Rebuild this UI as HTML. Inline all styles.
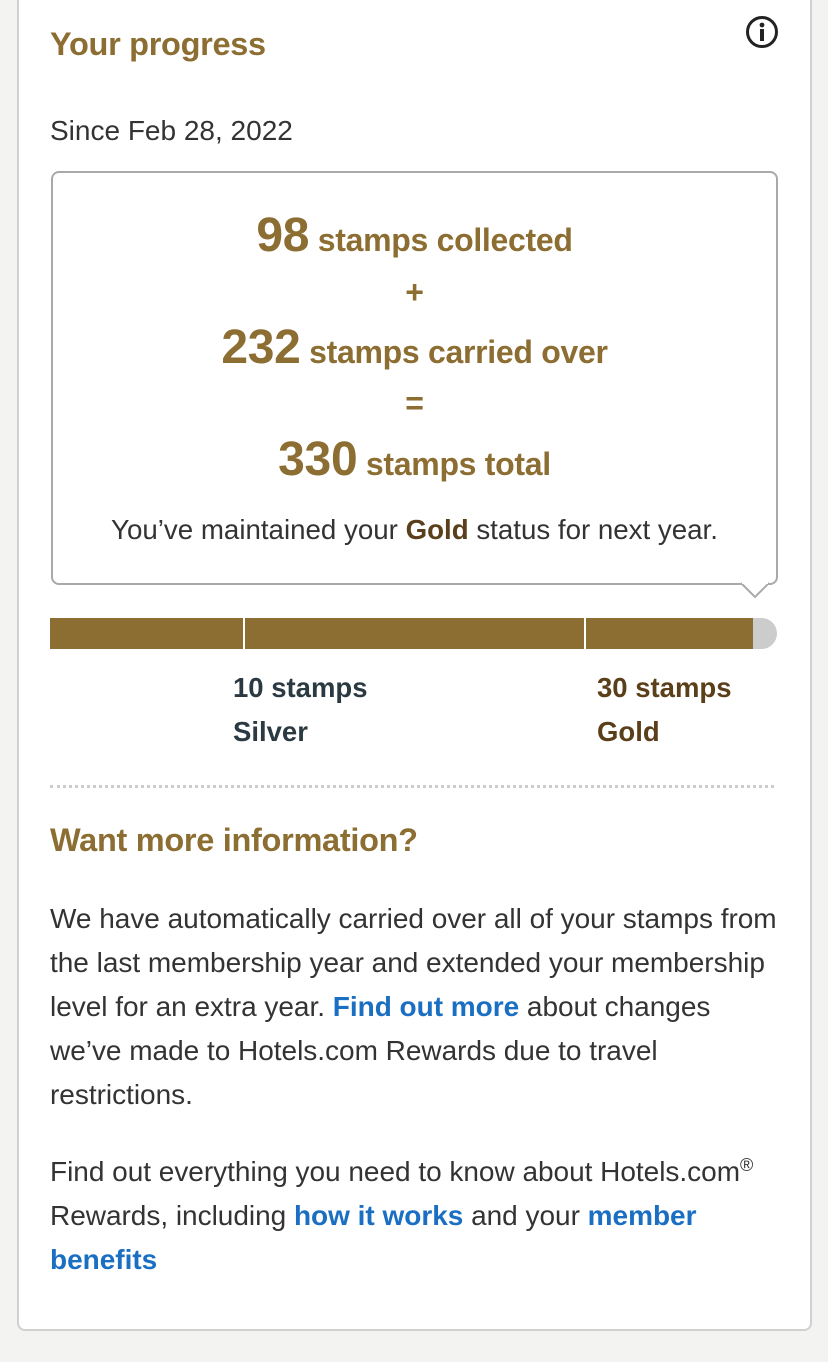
<!DOCTYPE html>
<html><head><meta charset="utf-8"><style>
*{margin:0;padding:0;box-sizing:border-box}
body{width:828px;height:1362px;background:#f3f3f1;font-family:"Liberation Sans",Arial,sans-serif;position:relative;overflow:hidden;color:#333}
.card{position:absolute;left:17px;top:-10px;width:795px;height:1341px;background:#fff;border:2px solid #d0d0d0;border-radius:8px}
.a{position:absolute;white-space:nowrap}
h2{font-size:32.5px;font-weight:bold;color:#8c6d32;letter-spacing:-0.3px}
.box{position:absolute;left:51px;top:171px;width:727px;height:414px;border:2px solid #a9a9a9;border-radius:8px;background:#fff}
.ln{position:absolute;left:0;width:100%;text-align:center;font-weight:bold;color:#8c6d32;font-size:32px;letter-spacing:-0.3px}
.ln b{font-size:48px}
.p{font-size:28px;line-height:44px;color:#333;letter-spacing:-0.02px}
.p b{color:#1a6fc2}
</style></head><body>
<div class="card"></div>
<h2 class="a" style="left:50px;top:26px">Your progress</h2>
<svg class="a" style="left:745px;top:15px" width="34" height="34" viewBox="0 0 34 34"><circle cx="17" cy="17" r="14.5" fill="none" stroke="#222" stroke-width="3"/><circle cx="17" cy="10" r="2.4" fill="#222"/><rect x="15" y="14" width="4" height="12" fill="#222"/></svg>
<div class="a" style="left:50px;top:115px;font-size:28px;color:#333">Since Feb 28, 2022</div>
<div class="box">
<div class="ln" style="top:35px"><b>98</b> stamps collected</div>
<div class="ln" style="top:101px">+</div>
<div class="ln" style="top:147px"><b>232</b> stamps carried over</div>
<div class="ln" style="top:212px">=</div>
<div class="ln" style="top:259px"><b>330</b> stamps total</div>
<div class="ln" style="top:341px;font-size:27.7px;font-weight:normal;color:#333;letter-spacing:0">You’ve maintained your <b style="font-size:27.7px;color:#5a3f1a">Gold</b> status for next year.</div>
</div>
<svg class="a" style="left:740px;top:582px" width="30" height="18" viewBox="0 0 30 18"><path d="M1 1 L15 15 L29 1" fill="#fff" stroke="#a9a9a9" stroke-width="2"/><rect x="2" y="0" width="26" height="2" fill="#fff"/></svg>
<div class="a" style="left:50px;top:618px;width:727px;height:31px;background:#ccc;border-radius:0 16px 16px 0"></div>
<div class="a" style="left:50px;top:618px;width:703px;height:31px;background:#8c6d32"></div>
<div class="a" style="left:243px;top:618px;width:2px;height:31px;background:#fff"></div>
<div class="a" style="left:584px;top:618px;width:2px;height:31px;background:#fff"></div>
<div class="a" style="left:233px;top:666px;font-size:27.5px;font-weight:bold;color:#2b3a42;line-height:44px">10 stamps<br>Silver</div>
<div class="a" style="left:597px;top:666px;font-size:27.5px;font-weight:bold;color:#5a3f1a;line-height:44px">30 stamps<br>Gold</div>
<div class="a" style="left:50px;top:785px;width:724px;border-top:3px dotted #ccc"></div>
<h2 class="a" style="left:50px;top:822px">Want more information?</h2>
<div class="a p" style="left:50px;top:897px">We have automatically carried over all of your stamps from<br>the last membership year and extended your membership<br>level for an extra year. <b>Find out more</b> about changes<br>we’ve made to Hotels.com Rewards due to travel<br>restrictions.</div>
<div class="a p" style="left:50px;top:1143px">Find out everything you need to know about Hotels.com<sup style="font-size:18px;vertical-align:10px">®</sup><br>Rewards, including <b>how it works</b> and your <b>member</b><br><b>benefits</b></div>
</body></html>
